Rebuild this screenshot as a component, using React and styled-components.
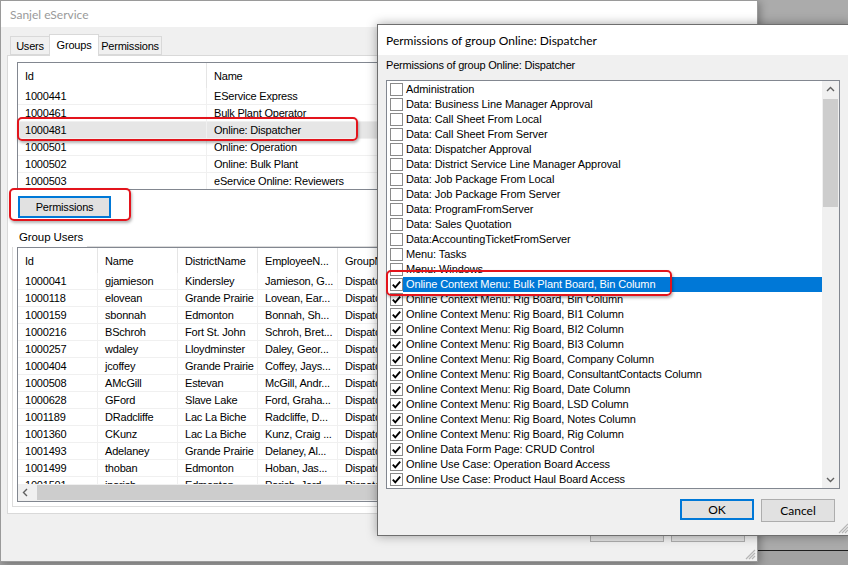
import styled, { createGlobalStyle } from "styled-components";

const GlobalStyle = createGlobalStyle`
  html, body {
    margin: 0;
    padding: 0;
    background: #a9a9a9;
  }
  body {
    font-family: "Liberation Sans", Arial, sans-serif;
    font-size: 11px;
    color: #000;
  }
  * {
    box-sizing: border-box;
  }
`;

const groups = [
  ["1000441", "EService Express"],
  ["1000461", "Bulk Plant Operator"],
  ["1000481", "Online: Dispatcher"],
  ["1000501", "Online: Operation"],
  ["1000502", "Online: Bulk Plant"],
  ["1000503", "eService Online: Reviewers"],
];

const users = [
  ["1000041", "gjamieson", "Kindersley", "Jamieson, G..."],
  ["1000118", "elovean", "Grande Prairie", "Lovean, Ear..."],
  ["1000159", "sbonnah", "Edmonton", "Bonnah, Sh..."],
  ["1000216", "BSchroh", "Fort St. John", "Schroh, Bret..."],
  ["1000257", "wdaley", "Lloydminster", "Daley, Geor..."],
  ["1000404", "jcoffey", "Grande Prairie", "Coffey, Jays..."],
  ["1000508", "AMcGill", "Estevan", "McGill, Andr..."],
  ["1000628", "GFord", "Slave Lake", "Ford, Graha..."],
  ["1001189", "DRadcliffe", "Lac La Biche", "Radcliffe, D..."],
  ["1001360", "CKunz", "Lac La Biche", "Kunz, Craig ..."],
  ["1001493", "Adelaney", "Grande Prairie", "Delaney, Al..."],
  ["1001499", "thoban", "Edmonton", "Hoban, Jas..."],
  ["1001501", "jparish", "Edmonton", "Parish, Jord..."],
];

const rigColumns = [
  "Bin", "BI1", "BI2", "BI3", "Company", "ConsultantContacts",
  "Date", "LSD", "Notes", "Rig",
];

const permissions = [
  "Administration",
  "Data: Business Line Manager Approval",
  "Data: Call Sheet From Local",
  "Data: Call Sheet From Server",
  "Data: Dispatcher Approval",
  "Data: District Service Line Manager Approval",
  "Data: Job Package From Local",
  "Data: Job Package From Server",
  "Data: ProgramFromServer",
  "Data: Sales Quotation",
  "Data:AccountingTicketFromServer",
  "Menu: Tasks",
  "Menu: Windows",
  "Online Context Menu: Bulk Plant Board, Bin Column",
  ...rigColumns.map((c) => `Online Context Menu: Rig Board, ${c} Column`),
  "Online Data Form Page: CRUD Control",
  "Online Use Case: Operation Board Access",
  "Online Use Case: Product Haul Board Access",
].map((label, i) => ({ label, checked: i >= 13, selected: i === 13 }));

const SizeGrip = () => (
  <GripIcon width="11" height="11" viewBox="0 0 11 11">
    <path d="M10 1 L1 10 M10 4 L4 10 M10 7 L7 10" stroke="#b5b5b5" strokeWidth="1.2" />
  </GripIcon>
);

const Chevron = ({ dir }) => {
  const d = {
    up: "M4 8 L7.5 4.5 L11 8",
    down: "M4 5 L7.5 8.5 L11 5",
    left: "M8 3 L4.5 6.5 L8 10",
  }[dir];
  return (
    <svg width="15" height="13" viewBox="0 0 15 13">
      <path d={d} fill="none" stroke="#606060" strokeWidth="1.4" />
    </svg>
  );
};

export default function App() {
  return (
    <>
      <GlobalStyle />
      <Desktop>
        <BackWindow />

        <MainWindow>
          <MainTitle>Sanjel eService</MainTitle>
          <MainBody>
            <TabStrip>
              <Tab $w={40}>Users</Tab>
              <Tab $w={50} $active>Groups</Tab>
              <Tab $w={64}>Permissions</Tab>
            </TabStrip>
            <TabPanel>
              <ListView $h={128} $ml={5}>
                <HeaderRow $cols="189px 1fr">
                  <HeaderCell>Id</HeaderCell>
                  <HeaderCell>Name</HeaderCell>
                </HeaderRow>
                {groups.map(([id, name]) => (
                  <Row key={id} $cols="189px 1fr" $selected={id === "1000481"}>
                    <Cell>{id}</Cell>
                    <Cell>{name}</Cell>
                  </Row>
                ))}
              </ListView>

              <FocusButton>Permissions</FocusButton>

              <GroupBox>
                <GroupCaption>
                  <span>Group Users</span>
                  <CaptionLine />
                </GroupCaption>
                <ListView $h={255} $ml={4}>
                  <HeaderRow $cols="80px 80px 80px 80px 1fr">
                    <HeaderCell>Id</HeaderCell>
                    <HeaderCell>Name</HeaderCell>
                    <HeaderCell>DistrictName</HeaderCell>
                    <HeaderCell>EmployeeN...</HeaderCell>
                    <HeaderCell>GroupName</HeaderCell>
                  </HeaderRow>
                  <RowArea>
                    {users.map(([id, name, district, employee]) => (
                      <Row key={id} $cols="80px 80px 80px 80px 1fr">
                        <Cell>{id}</Cell>
                        <Cell>{name}</Cell>
                        <Cell>{district}</Cell>
                        <Cell>{employee}</Cell>
                        <Cell>Dispatcher</Cell>
                      </Row>
                    ))}
                  </RowArea>
                  <HScroll>
                    <ArrowBox>
                      <Chevron dir="left" />
                    </ArrowBox>
                    <HThumb />
                  </HScroll>
                </ListView>
              </GroupBox>
            </TabPanel>
            <BottomButtons>
              <PlainButton $w={74}>Save</PlainButton>
              <PlainButton $w={74}>Close</PlainButton>
            </BottomButtons>
          </MainBody>
          <SizeGrip />
        </MainWindow>

        <Dialog>
          <DialogTitle>Permissions of group Online: Dispatcher</DialogTitle>
          <DialogBody>
            <DialogLabel>Permissions of group Online: Dispatcher</DialogLabel>
            <CheckList>
              <Items>
                {permissions.map((p) => (
                  <Item key={p.label}>
                    <Box>
                      {p.checked && (
                        <svg width="11" height="11" viewBox="0 0 11 11">
                          <path d="M1.8 5.6 L4.3 8.3 L9.2 2.6" fill="none" stroke="#000" strokeWidth="1.9" />
                        </svg>
                      )}
                    </Box>
                    <ItemText $selected={p.selected}>{p.label}</ItemText>
                  </Item>
                ))}
              </Items>
              <VScroll>
                <ArrowBox $v>
                  <Chevron dir="up" />
                </ArrowBox>
                <VTrack>
                  <VThumb />
                </VTrack>
                <ArrowBox $v>
                  <Chevron dir="down" />
                </ArrowBox>
              </VScroll>
            </CheckList>
            <DialogButtons>
              <PlainButton $w={74} $focus>OK</PlainButton>
              <PlainButton $w={74}>Cancel</PlainButton>
            </DialogButtons>
          </DialogBody>
          <SizeGrip />
        </Dialog>

        <Highlight style={{ left: 17, top: 117, width: 341, height: 24 }} />
        <Highlight style={{ left: 9, top: 188, width: 122, height: 33 }} />
        <Highlight style={{ left: 386, top: 270, width: 286, height: 26 }} />
      </Desktop>
    </>
  );
}

// Styled components

const Desktop = styled.div`
  position: relative;
  width: 848px;
  height: 565px;
  overflow: hidden;
  background: #ababab;
`;

const BackWindow = styled.div`
  position: absolute;
  left: 0;
  right: 0;
  top: 550px;
  bottom: 0;
  border-top: 1px solid #1e1e1e;
  background: #a2a2a2;
`;

const MainWindow = styled.div`
  position: absolute;
  left: 0;
  top: 0;
  width: 758px;
  height: 562px;
  border: 1px solid #9a9a9a;
  background: #f0f0f0;
  display: flex;
  flex-direction: column;
  box-shadow: 2px 2px 8px rgba(0, 0, 0, 0.3);
`;

const MainTitle = styled.div`
  height: 26px;
  flex: none;
  background: #fff;
  padding-left: 9px;
  display: flex;
  align-items: center;
  font-family: "Lato", "Noto Sans", sans-serif;
  font-size: 12px;
  color: #9a9a9a;
`;

const MainBody = styled.div`
  flex: 1;
  padding: 7px 12px 0 6px;
  display: flex;
  flex-direction: column;
`;

const TabStrip = styled.div`
  display: flex;
  align-items: flex-end;
  height: 21px;
  padding-left: 3px;
  position: relative;
  z-index: 1;
`;

const Tab = styled.div`
  width: ${(p) => p.$w}px;
  height: ${(p) => (p.$active ? 22 : 19)}px;
  margin-left: -1px;
  margin-bottom: ${(p) => (p.$active ? -1 : 0)}px;
  padding-bottom: ${(p) => (p.$active ? 2 : 0)}px;
  border: 1px solid #d9d9d9;
  border-bottom: ${(p) => (p.$active ? "none" : "1px solid #d9d9d9")};
  background: ${(p) => (p.$active ? "#fff" : "#f0f0f0")};
  display: flex;
  align-items: center;
  justify-content: center;
  letter-spacing: -0.2px;
  &:first-child {
    margin-left: 0;
  }
`;

const TabPanel = styled.div`
  width: 744px;
  height: 459px;
  border: 1px solid #d9d9d9;
  background: #fff;
  padding: 6px 0 0 4px;
  display: flex;
  flex-direction: column;
  overflow: hidden;
`;

const ListView = styled.div`
  margin-left: ${(p) => p.$ml}px;
  height: ${(p) => p.$h}px;
  flex: none;
  border: 1px solid #828790;
  background: #fff;
  display: flex;
  flex-direction: column;
  overflow: hidden;
  letter-spacing: -0.2px;
`;

const HeaderRow = styled.div`
  display: grid;
  grid-template-columns: ${(p) => p.$cols};
  height: 25px;
  flex: none;
`;

const HeaderCell = styled.div`
  display: flex;
  align-items: center;
  padding-left: 7px;
  border-right: 1px solid #e5e5e5;
  white-space: nowrap;
  overflow: hidden;
`;

const Row = styled.div`
  display: grid;
  grid-template-columns: ${(p) => p.$cols};
  height: 17px;
  flex: none;
  background: ${(p) => (p.$selected ? "#e6e6e6" : "transparent")};
`;

const Cell = styled.div`
  display: flex;
  align-items: center;
  padding-left: 7px;
  border-right: 1px solid #f0f0f0;
  border-bottom: 1px solid #f0f0f0;
  white-space: nowrap;
  overflow: hidden;
`;

const RowArea = styled.div`
  flex: 1;
  overflow: hidden;
`;

const HScroll = styled.div`
  height: 17px;
  flex: none;
  background: #f0f0f0;
  display: flex;
  align-items: center;
`;

const ArrowBox = styled.div`
  width: 17px;
  height: 17px;
  flex: none;
  display: flex;
  align-items: center;
  justify-content: center;
`;

const HThumb = styled.div`
  flex: 1;
  height: 15px;
  margin-left: 2px;
  background: #cdcdcd;
`;

const FocusButton = styled.div`
  width: 93px;
  height: 22px;
  margin: 6px 0 0 6px;
  flex: none;
  border: 2px solid #0078d7;
  background: #e1e1e1;
  display: flex;
  align-items: center;
  justify-content: center;
  letter-spacing: -0.2px;
`;

const GroupBox = styled.div`
  margin-top: 10px;
  border-left: 1px solid #dcdcdc;
  border-bottom: 1px solid #dcdcdc;
  padding-bottom: 4px;
  flex: none;
`;

const GroupCaption = styled.div`
  display: flex;
  align-items: flex-end;
  height: 19px;
  margin-left: -1px;
  background: #fff;
  span {
    padding: 0 0 4px 7px;
    letter-spacing: -0.1px;
    font-size: 11.5px;
  }
`;

const CaptionLine = styled.div`
  flex: 1;
  border-bottom: 1px solid #dcdcdc;
  margin-left: 4px;
`;

const BottomButtons = styled.div`
  display: flex;
  justify-content: flex-end;
  gap: 7px;
  margin-top: 5px;
`;

const PlainButton = styled.div`
  width: ${(p) => p.$w}px;
  height: ${(p) => (p.$focus ? 21 : 23)}px;
  border: ${(p) => (p.$focus ? "2px solid #0078d7" : "1px solid #adadad")};
  background: #e1e1e1;
  display: flex;
  align-items: center;
  justify-content: center;
  font-family: "Lato", "Noto Sans", sans-serif;
  font-size: 12px;
`;

const GripIcon = styled.svg`
  position: absolute;
  right: 1px;
  bottom: 1px;
`;

const Dialog = styled.div`
  position: absolute;
  left: 377px;
  top: 24px;
  width: 474px;
  height: 512px;
  border: 1px solid #6e6e6e;
  background: #f0f0f0;
  display: flex;
  flex-direction: column;
  box-shadow: 0 0 10px rgba(0, 0, 0, 0.35);
`;

const DialogTitle = styled.div`
  height: 30px;
  flex: none;
  background: #fff;
  padding-left: 8px;
  display: flex;
  align-items: center;
  font-family: "Lato", "Noto Sans", sans-serif;
  font-size: 12px;
`;

const DialogBody = styled.div`
  flex: 1;
  padding: 3px 15px 0 8px;
  display: flex;
  flex-direction: column;
`;

const DialogLabel = styled.div`
  height: 14px;
  line-height: 14px;
  letter-spacing: -0.2px;
`;

const CheckList = styled.div`
  margin-top: 8px;
  width: 454px;
  height: 409px;
  border: 1px solid #828790;
  background: #fff;
  display: flex;
`;

const Items = styled.div`
  flex: 1;
  padding-top: 1px;
  overflow: hidden;
`;

const Item = styled.div`
  display: flex;
  align-items: center;
  height: 15px;
`;

const Box = styled.div`
  width: 13px;
  height: 13px;
  margin-left: 3px;
  border: 1px solid #8a8a8a;
  background: #fff;
  display: flex;
  align-items: center;
  justify-content: center;
  flex: none;
`;

const ItemText = styled.div`
  flex: 1;
  height: 15px;
  line-height: 15px;
  padding-left: 3px;
  white-space: nowrap;
  letter-spacing: -0.1px;
  background: ${(p) => (p.$selected ? "#0078d7" : "transparent")};
  color: ${(p) => (p.$selected ? "#fff" : "#000")};
`;

const VScroll = styled.div`
  width: 17px;
  flex: none;
  background: #f0f0f0;
  display: flex;
  flex-direction: column;
`;

const VTrack = styled.div`
  flex: 1;
  padding: 1px 1px;
`;

const VThumb = styled.div`
  height: 108px;
  background: #cdcdcd;
`;

const DialogButtons = styled.div`
  display: flex;
  justify-content: flex-end;
  gap: 7px;
  margin-top: 10px;
`;

const Highlight = styled.div`
  position: absolute;
  border: 2px solid #e3141c;
  border-radius: 5px;
  box-shadow: 1px 2px 3px rgba(0, 0, 0, 0.3);
  pointer-events: none;
`;
